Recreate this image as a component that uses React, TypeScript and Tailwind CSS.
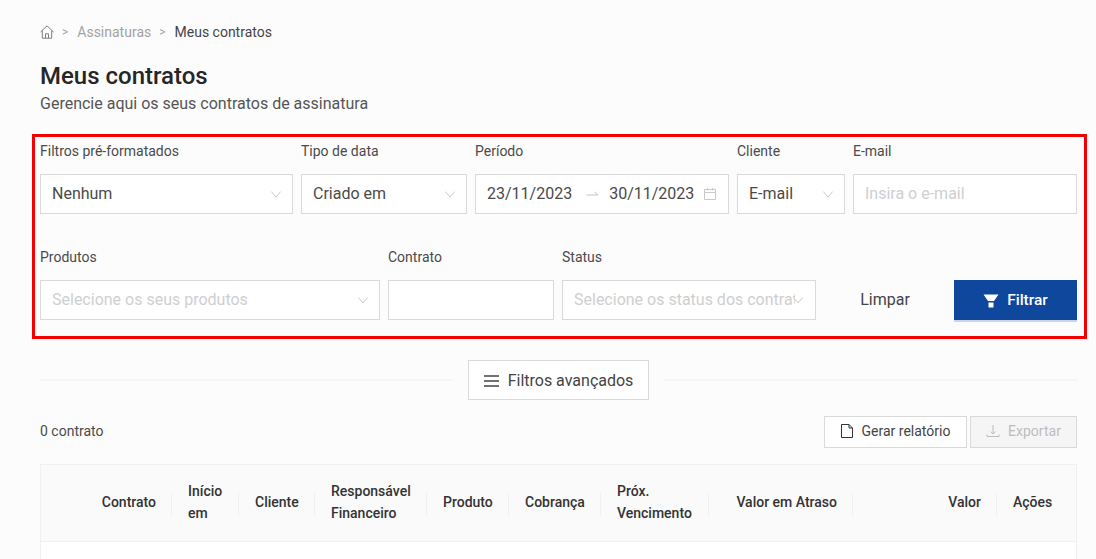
import type { ReactNode } from "react"

function Chevron({ className = "" }: { className?: string }) {
  return (
    <svg className={className} width="10" height="7" viewBox="0 0 10 7" fill="none" stroke="#c9c9c9" strokeWidth="1">
      <path d="M0.4 0.6 L5 6 L9.6 0.6" />
    </svg>
  )
}

function HomeIcon() {
  return (
    <svg width="14" height="14" viewBox="0 0 14 14" fill="none" stroke="#7d7d7d" strokeWidth="1">
      <path d="M0.5 7 L7 0.8 L13.5 7 M2.3 5.6 V13.2 H11.7 V5.6 M5.5 13.2 V8.8 H8.5 V13.2" />
    </svg>
  )
}

function Field({ label, width, children }: { label: string; width: string; children: ReactNode }) {
  return (
    <div className={`flex flex-col ${width}`}>
      <label className="h-[37px] pt-[3px] text-[14px] leading-[22px] text-[#4a4a4a]">{label}</label>
      {children}
    </div>
  )
}

function Select({ value, placeholder }: { value?: string; placeholder?: string }) {
  return (
    <div className="flex h-[40px] items-center justify-between border border-[#d9d9d9] bg-white pl-[11px] pr-[11px] text-[16px]">
      {value ? (
        <span className="text-[#4a4a4a]">{value}</span>
      ) : (
        <span className="truncate text-[#cfcfcf]">{placeholder}</span>
      )}
      <Chevron className="shrink-0" />
    </div>
  )
}

const columns = [
  { lines: ["Contrato"], right: true },
  { lines: ["Início", "em"] },
  { lines: ["Cliente"] },
  { lines: ["Responsável", "Financeiro"] },
  { lines: ["Produto"] },
  { lines: ["Cobrança"] },
  { lines: ["Próx.", "Vencimento"] },
  { lines: ["Valor em Atraso"], right: true },
  { lines: ["Valor"], right: true },
  { lines: ["Ações"], last: true },
]

export default function App() {
  return (
    <div className="h-[559px] overflow-hidden bg-[#fcfcfc] pl-[40px] pr-[19px] font-['Roboto',sans-serif]">
      {/* Breadcrumb */}
      <div className="flex h-[64px] items-center text-[14px] text-[#a3a3a3]">
        <HomeIcon />
        <span className="ml-[8px] text-[12px]">&gt;</span>
        <span className="ml-[9px]">Assinaturas</span>
        <span className="ml-[8px] text-[12px]">&gt;</span>
        <span className="ml-[9px] text-[#444444]">Meus contratos</span>
      </div>

      <h1 className="text-[24px] font-medium leading-[24px] text-[#262626]">Meus contratos</h1>
      <p className="mt-[4px] text-[16px] leading-[24px] text-[#555555]">
        Gerencie aqui os seus contratos de assinatura
      </p>

      {/* Filtros */}
      <div className="mr-[-10px] ml-[-8px] mt-[18px] h-[205px] border-[3px] border-[#f40000] pl-[5px] pr-[7px]">
        <div className="flex gap-[8px]">
          <Field label="Filtros pré-formatados" width="w-[253px]">
            <Select value="Nenhum" />
          </Field>
          <Field label="Tipo de data" width="w-[166px]">
            <Select value="Criado em" />
          </Field>
          <Field label="Período" width="w-[254px]">
            <div className="flex h-[40px] items-center border border-[#d9d9d9] bg-white pl-[11px] text-[16px] text-[#4a4a4a]">
              <span>23/11/2023</span>
              <svg className="ml-[14px]" width="13" height="8" viewBox="0 0 13 8" fill="none" stroke="#c4c4c4" strokeWidth="1">
                <path d="M0.5 5 H12 L8.5 2" />
              </svg>
              <span className="ml-[10px]">30/11/2023</span>
              <svg className="ml-[10px]" width="12" height="12" viewBox="0 0 12 12" fill="none" stroke="#c9c9c9" strokeWidth="1">
                <path d="M0.5 1.5 H11.5 V11.5 H0.5 Z M0.5 4.5 H11.5 M3.5 0 V2.5 M8.5 0 V2.5" />
              </svg>
            </div>
          </Field>
          <Field label="Cliente" width="w-[108px]">
            <Select value="E-mail" />
          </Field>
          <Field label="E-mail" width="w-[224px]">
            <div className="flex h-[40px] items-center border border-[#d9d9d9] bg-white pl-[11px] text-[16px] text-[#cfcfcf]">
              Insira o e-mail
            </div>
          </Field>
        </div>

        <div className="mt-[29px] flex gap-[8px]">
          <Field label="Produtos" width="w-[340px]">
            <Select placeholder="Selecione os seus produtos" />
          </Field>
          <Field label="Contrato" width="w-[166px]">
            <div className="h-[40px] border border-[#d9d9d9] bg-white" />
          </Field>
          <Field label="Status" width="w-[254px]">
            <div className="flex h-[40px] items-center border border-[#d9d9d9] bg-white pl-[11px] pr-[12px] text-[16px] text-[#cfcfcf]">
              <span className="min-w-0 flex-1 overflow-hidden whitespace-nowrap">Selecione os status dos contratos</span>
              <Chevron className="ml-[-2px] shrink-0" />
            </div>
          </Field>
          <div className="flex flex-1 items-end">
            <button className="h-[40px] w-[122px] text-[16px] text-[#444444]">Limpar</button>
            <button className="ml-[8px] flex h-[42px] w-[123px] translate-y-[2px] items-center justify-center gap-[8px] border-b-2 border-[#c9d5e8] bg-[#0f479d] pt-[2px] text-[15.5px] font-medium text-white">
              <svg width="16" height="14" viewBox="0 0 16 14" fill="white">
                <path d="M0.5 0.5 H15.5 L11 7 H5 Z M5.5 8.5 H10.5 V13.5 H5.5 Z" />
              </svg>
              Filtrar
            </button>
          </div>
        </div>
      </div>

      {/* Filtros avancados */}
      <div className="mt-[21px] flex items-center">
        <div className="h-[2px] w-[412px] bg-[#f5f5f5]" />
        <button className="ml-[16px] flex h-[40px] w-[181px] items-center justify-center gap-[9px] border border-[#d9d9d9] bg-white pt-[2px] text-[16px] text-[#444444]">
          <svg width="15" height="14" viewBox="0 0 15 14" fill="none" stroke="#444444" strokeWidth="1.4">
            <path d="M0 2 H15 M0 7 H15 M0 12 H15" />
          </svg>
          Filtros avançados
        </button>
        <div className="ml-[15px] h-[2px] flex-1 bg-[#f5f5f5]" />
      </div>

      {/* Toolbar */}
      <div className="mt-[16px] flex items-center">
        <span className="pb-[2px] text-[14px] text-[#4a4a4a]">0 contrato</span>
        <button className="ml-auto flex h-[32px] w-[143px] items-center justify-center gap-[9px] border border-[#d9d9d9] bg-white pb-[2px] text-[14px] text-[#444444]">
          <svg width="12" height="14" viewBox="0 0 12 14" fill="none" stroke="#333333" strokeWidth="1">
            <path d="M0.5 0.5 H8 L11.5 4 V13.5 H0.5 Z M8 0.5 V4 H11.5" />
          </svg>
          Gerar relatório
        </button>
        <button className="ml-[3px] flex h-[32px] w-[107px] items-center justify-center gap-[8px] border border-[#d9d9d9] bg-[#f5f5f5] pb-[2px] text-[14px] text-[#bdbdbd]">
          <svg width="14" height="14" viewBox="0 0 14 14" fill="none" stroke="#bdbdbd" strokeWidth="1">
            <path d="M7 1 V9.5 M4.5 7.5 L7 10 L9.5 7.5 M1 10.5 V12.5 H13 V10.5" />
          </svg>
          Exportar
        </button>
      </div>

      {/* Tabela */}
      <div className="mt-[16px] border border-b-0 border-[#f0f0f0] bg-white">
        <div className="grid h-[77px] grid-cols-[131px_67px_76px_112px_82px_92px_108px_144px_144px_1fr] border-b border-[#f0f0f0] bg-[#fafafa] text-[14px] font-medium leading-[22px] text-[#333333]">
          {columns.map((col) => (
            <div
              key={col.lines[0]}
              className={`relative flex flex-col justify-center px-[16px] pb-[2px] ${col.right ? "items-end" : "items-start"}`}
            >
              {col.lines.map((line) => (
                <span key={line} className="whitespace-nowrap">
                  {line}
                </span>
              ))}
              {!col.last && <div className="absolute right-0 top-[28px] h-[23px] w-px bg-[#f0f0f0]" />}
            </div>
          ))}
        </div>
        <div className="h-[40px]" />
      </div>
    </div>
  )
}
